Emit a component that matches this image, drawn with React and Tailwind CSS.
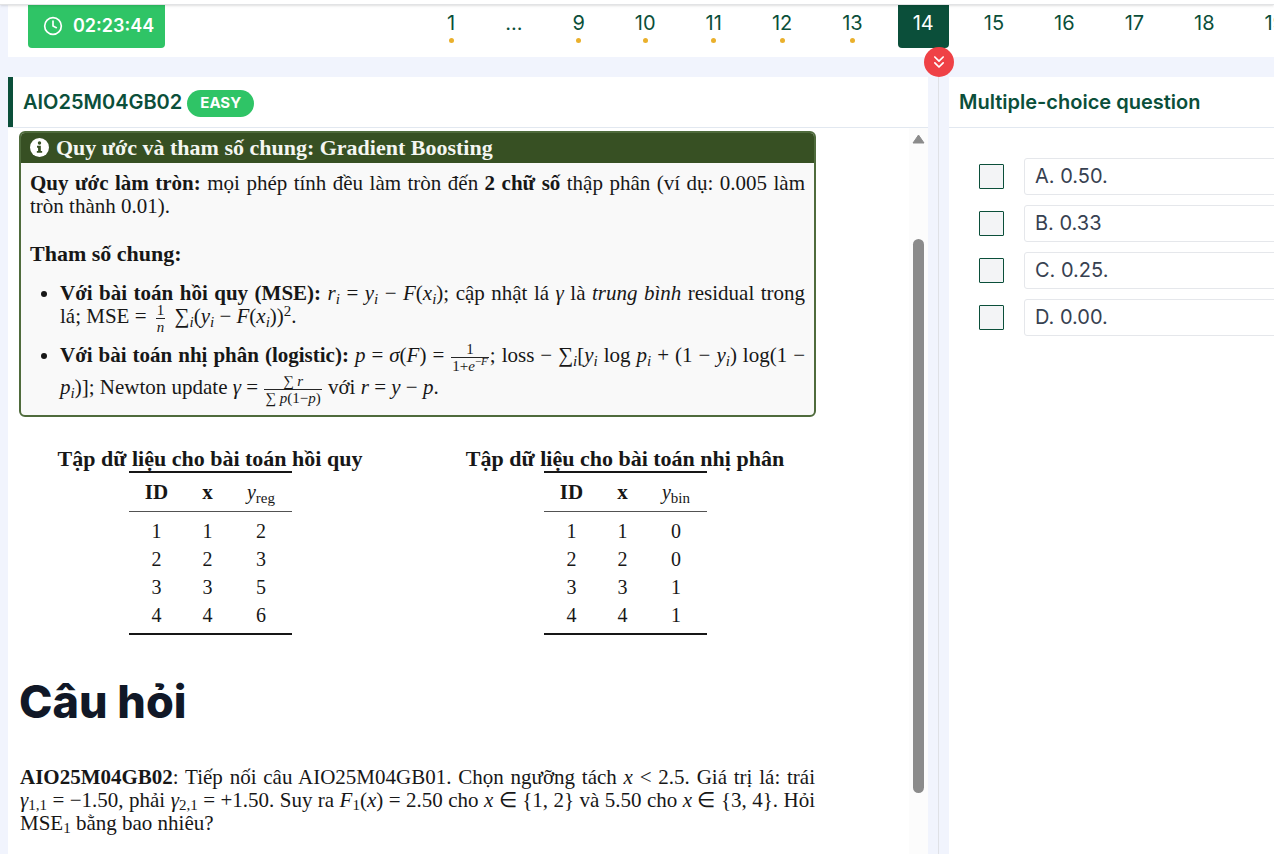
import { ChevronsDown, Clock } from "lucide-react";

const pages = [
  { label: "1", dot: true },
  { label: "..." },
  { label: "9", dot: true },
  { label: "10", dot: true },
  { label: "11", dot: true },
  { label: "12", dot: true },
  { label: "13", dot: true },
  { label: "14", active: true },
  { label: "15" },
  { label: "16" },
  { label: "17" },
  { label: "18" },
  { label: "19" },
];

const answers = ["A. 0.50.", "B. 0.33", "C. 0.25.", "D. 0.00."];

function Line({ full, children }) {
  return (
    <span
      className={
        full
          ? "block h-[23px] whitespace-nowrap [text-align-last:justify]"
          : "block h-[23px] whitespace-nowrap"
      }
    >
      {children}
    </span>
  );
}

function Sub({ children, upright }) {
  return (
    <sub className={upright ? "text-[15px] leading-none" : "text-[15px] leading-none italic"}>
      {children}
    </sub>
  );
}

function Frac({ top, bottom }) {
  return (
    <span className="-my-3 mx-px inline-flex flex-col items-center align-middle text-[15px] leading-4">
      <span className="px-1">{top}</span>
      <span className="border-t border-neutral-800 px-px">{bottom}</span>
    </span>
  );
}

function PageButton({ label, dot, active }) {
  return (
    <button
      type="button"
      className={
        active
          ? "flex h-[43px] shrink-0 flex-col items-center rounded-b bg-[#0b4f3a] px-[15px] pt-1 text-white"
          : "flex h-[43px] shrink-0 flex-col items-center px-[15px] pt-1 text-[#0b4f3a]"
      }
    >
      <span className="text-xl leading-7">{label}</span>
      {dot && <span className="mt-px size-[5px] rounded-full bg-[#eab02c]" />}
    </button>
  );
}

function DataTable({ title, sub, rows }) {
  return (
    <table className="mx-auto border-collapse text-center text-[20px] leading-7">
      <caption className="h-[24px] whitespace-nowrap text-[22px] leading-[24px] font-bold">
        <span className="-mx-24">{title}</span>
      </caption>
      <thead className="border-t-2 border-b border-t-neutral-900 border-b-neutral-600">
        <tr className="h-[39px]">
          <th className="w-[56px] text-[21px] font-bold">ID</th>
          <th className="w-[46px] text-[21px] font-bold">x</th>
          <th className="w-[61px] font-normal">
            <i>y</i>
            <Sub upright>{sub}</Sub>
          </th>
        </tr>
      </thead>
      <tbody className="border-b-2 border-neutral-900 before:block before:h-[5px]">
        {rows.map((y, i) => (
          <tr key={i}>
            <td>{i + 1}</td>
            <td>{i + 1}</td>
            <td>{y}</td>
          </tr>
        ))}
        <tr aria-hidden="true" className="h-[5px]" />
      </tbody>
    </table>
  );
}

function Conventions() {
  return (
    <section className="overflow-hidden rounded-md border-2 border-[#4f6b3c] bg-[#f9f9f9]">
      <h2 className="flex h-[30px] items-center gap-[7px] bg-[#375023] px-[9px] pb-px text-[22px] font-bold text-[#f4f6f2]">
        <svg viewBox="0 0 20 20" className="size-[19px] shrink-0" aria-hidden="true">
          <circle cx="10" cy="10" r="10" fill="#fff" />
          <circle cx="10" cy="5.3" r="1.8" fill="#375023" />
          <path d="M7.4 8.2h4v5.4h1.4v2H7.2v-2h1.3v-3.4H7.4z" fill="#375023" />
        </svg>
        Quy ước và tham số chung: Gradient Boosting
      </h2>
      <div className="px-[9px] pt-[9px] pb-4">
        <p>
          <Line full>
            <b>Quy ước làm tròn:</b> mọi phép tính đều làm tròn đến <b>2 chữ số</b> thập phân (ví
            dụ: 0.005 làm
          </Line>
          <Line>tròn thành 0.01).</Line>
        </p>
        <p className="mt-6 text-[22px] font-bold">
          <Line>Tham số chung:</Line>
        </p>
        <ul className="mt-[17px] ml-[30px] flex list-disc flex-col gap-4">
          <li>
            <Line full>
              <b>Với bài toán hồi quy (MSE):</b> <i>r</i>
              <Sub>i</Sub> = <i>y</i>
              <Sub>i</Sub> − <i>F</i>(<i>x</i>
              <Sub>i</Sub>); cập nhật lá <i>γ</i> là <i>trung bình</i> residual trong
            </Line>
            <Line>
              lá; MSE = <Frac top="1" bottom={<i>n</i>} /> ∑<Sub>i</Sub>(<i>y</i>
              <Sub>i</Sub> − <i>F</i>(<i>x</i>
              <Sub>i</Sub>))<sup className="text-[15px] leading-none">2</sup>.
            </Line>
          </li>
          <li>
            <Line full>
              <b>Với bài toán nhị phân (logistic):</b> <i>p</i> = <i>σ</i>(<i>F</i>) ={" "}
              <Frac
                top="1"
                bottom={
                  <>
                    1+<i>e</i>
                    <sup className="text-[11px] leading-none">
                      −<i>F</i>
                    </sup>
                  </>
                }
              />
              ; loss − ∑<Sub>i</Sub>[<i>y</i>
              <Sub>i</Sub> log <i>p</i>
              <Sub>i</Sub> + (1 − <i>y</i>
              <Sub>i</Sub>) log(1 −
            </Line>
            <span className="mt-[9px] block">
              <Line>
                <i>p</i>
                <Sub>i</Sub>)]; Newton update <i>γ</i> ={" "}
                <Frac
                  top={
                    <>
                      ∑ <i>r</i>
                    </>
                  }
                  bottom={
                    <>
                      ∑ <i>p</i>(1−<i>p</i>)
                    </>
                  }
                />{" "}
                với <i>r</i> = <i>y</i> − <i>p</i>.
              </Line>
            </span>
          </li>
        </ul>
      </div>
    </section>
  );
}

function Problem() {
  return (
    <article className="min-w-0 flex-1 overflow-hidden pt-[3px] pl-[11px]">
      <div className="max-w-[797px] font-['Liberation_Serif',serif] text-[21px] leading-[23px] text-neutral-900">
        <Conventions />
        <div className="mt-[30px] grid grid-cols-2 gap-[33px]">
          <DataTable title="Tập dữ liệu cho bài toán hồi quy" sub="reg" rows={[2, 3, 5, 6]} />
          <DataTable title="Tập dữ liệu cho bài toán nhị phân" sub="bin" rows={[0, 0, 1, 1]} />
        </div>
        <h1 className="mt-[37px] font-[Inter,sans-serif] text-[45px] leading-[60px] font-extrabold text-[#111827]">
          Câu hỏi
        </h1>
        <p className="mt-[34px] px-px">
          <Line full>
            <b>AIO25M04GB02</b>: Tiếp nối câu AIO25M04GB01. Chọn ngưỡng tách <i>x</i> &lt; 2.5. Giá
            trị lá: trái
          </Line>
          <Line full>
            <i>γ</i>
            <Sub upright>1,1</Sub> = −1.50, phải <i>γ</i>
            <Sub upright>2,1</Sub> = +1.50. Suy ra <i>F</i>
            <Sub upright>1</Sub>(<i>x</i>) = 2.50 cho <i>x</i> ∈ {"{1, 2}"} và 5.50 cho <i>x</i> ∈{" "}
            {"{3, 4}"}. Hỏi
          </Line>
          <Line>
            MSE<Sub upright>1</Sub> bằng bao nhiêu?
          </Line>
        </p>
      </div>
    </article>
  );
}

function ScrollTrack() {
  return (
    <div className="flex w-[19px] shrink-0 flex-col items-center bg-[#fcfcfc] pt-[6px]" aria-hidden="true">
      <svg viewBox="0 0 13 10" className="h-[10px] w-[13px] shrink-0">
        <path d="M6.5 1 12 9H1z" fill="#8b8b8b" stroke="#8b8b8b" strokeLinejoin="round" />
      </svg>
      <div className="flex-[95]" />
      <div className="w-[11px] flex-[554] rounded-full bg-[#8b8b8b]" />
      <div className="flex-[61]" />
    </div>
  );
}

export default function App() {
  return (
    <div className="flex h-screen flex-col overflow-hidden bg-[#f1f4fd] font-[Inter,sans-serif]">
      <div className="relative h-[5px] shrink-0 border-b border-[#e2e3e5] bg-white shadow-sm" />
      <header className="ml-2 flex h-[52px] shrink-0 bg-white pl-5">
        <div className="flex h-[43px] w-[137px] shrink-0 items-center gap-[10px] rounded-b bg-[#2fc466] pb-px pl-[15px] text-lg font-semibold text-white">
          <Clock size={20} strokeWidth={2} />
          <time>02:23:44</time>
        </div>
        <nav aria-label="Questions" className="ml-[267px] flex min-w-0 flex-1 gap-5 overflow-hidden">
          {pages.map((p) => (
            <PageButton key={p.label} {...p} />
          ))}
        </nav>
      </header>
      <main className="mt-5 ml-2 grid min-h-0 flex-1 grid-cols-[minmax(0,920fr)_21px_minmax(0,325fr)]">
        <section className="flex min-h-0 flex-col bg-white">
          <div className="flex h-[51px] shrink-0 items-stretch border-b border-[#e2e8f0]">
            <div className="flex h-[50px] items-center gap-[5px] border-l-[5px] border-[#0b4f3a] pl-[10px]">
              <h2 className="text-xl font-semibold text-[#0b4f3a]">AIO25M04GB02</h2>
              <span className="mt-[3px] flex h-[27px] items-center rounded-full bg-[#2fc466] px-[13px] text-[15px] font-bold text-white">
                EASY
              </span>
            </div>
          </div>
          <div className="flex min-h-0 flex-1">
            <Problem />
            <ScrollTrack />
          </div>
        </section>
        <div className="relative flex justify-center">
          <div className="w-px bg-[#dfe1e6]" />
          <button
            type="button"
            aria-label="Collapse"
            className="absolute -top-[30px] flex size-[30px] items-center justify-center rounded-full bg-[#ef4146] text-white"
          >
            <ChevronsDown size={20} />
          </button>
        </div>
        <section className="overflow-hidden bg-white">
          <h2 className="flex h-[51px] items-center border-b border-[#e2e8f0] pl-[10px] text-xl font-semibold whitespace-nowrap text-[#0b4f3a]">
            Multiple-choice question
          </h2>
          <div className="flex flex-col gap-[10px] pt-[30px] pl-[30px]">
            {answers.map((a) => (
              <label key={a} className="flex items-center gap-5 text-xl text-[#374151]">
                <input
                  type="checkbox"
                  className="size-[25px] shrink-0 appearance-none rounded-[1px] border border-[#0b4f3a] bg-[#f3f4f6]"
                />
                <span className="flex h-[37px] w-full shrink-0 items-center rounded-[3px] border border-[#e5e7eb] pb-[2px] pl-[10px]">
                  {a}
                </span>
              </label>
            ))}
          </div>
        </section>
      </main>
    </div>
  );
}
